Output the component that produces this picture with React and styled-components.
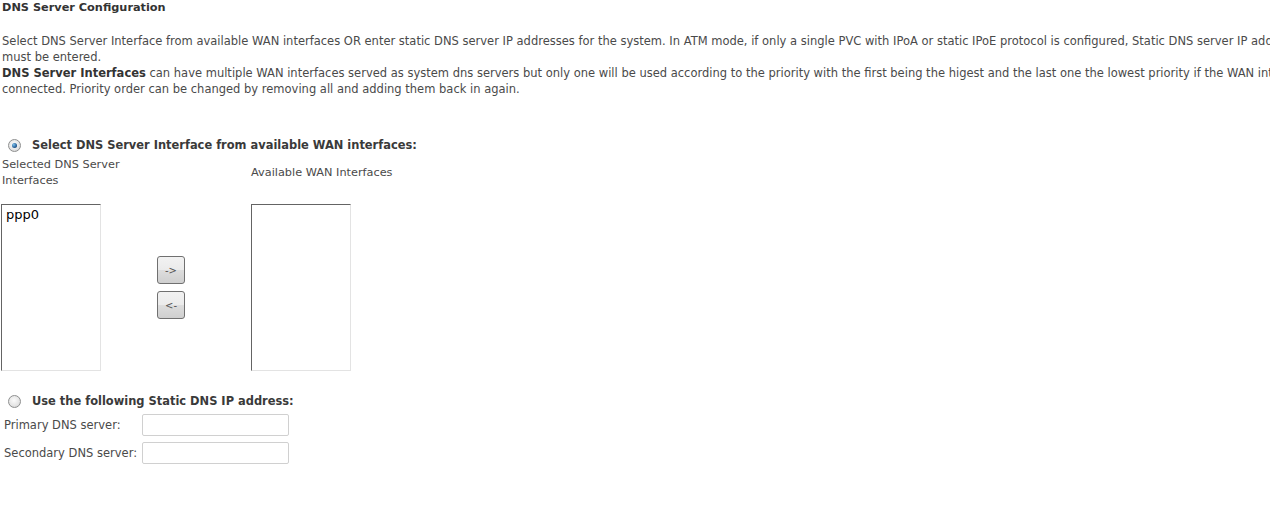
import React from "react";
import styled, { createGlobalStyle } from "styled-components";

const Global = createGlobalStyle`
  html, body { margin: 0; padding: 0; background: #fff; }
  body { font-family: Tahoma, "DejaVu Sans", Verdana, sans-serif; }
`;

const Viewport = styled.div`
  width: 1270px;
  overflow: hidden;
`;

const Page = styled.div`
  width: 1325px;
  color: #4a4a4a;
  font-size: 11.5px;
  line-height: 16px;
`;

const Title = styled.div`
  font-weight: bold;
  color: #333;
  padding-left: 2px;
  font-size: 11.3px;
  line-height: 16px;
`;

const Para = styled.p`
  margin: 17px 0 0;
  padding-left: 2px;
  line-height: 16px;
  b { color: #333; }
`;

const Section = styled.div`
  display: flex;
  align-items: center;
  gap: 11px;
  margin-top: ${(p) => p.$top}px;
  padding-left: 8px;
  font-weight: bold;
  color: #3a3a3a;
  font-size: 11.45px;
`;

const Radio = styled.span`
  width: 13px;
  height: 13px;
  border-radius: 50%;
  border: 1px solid #8e8f8f;
  background: radial-gradient(circle at 45% 40%, #fbfbfb, #e4e4e4 60%, #c8c8c8);
  display: inline-flex;
  align-items: center;
  justify-content: center;
  box-sizing: border-box;
  &::after {
    content: "";
    display: ${(p) => (p.$on ? "block" : "none")};
    width: 5px;
    height: 5px;
    border-radius: 50%;
    background: radial-gradient(circle at 35% 35%, #7fc4f0, #1b4f86 70%, #0f3460);
  }
`;

const Picker = styled.div`
  display: grid;
  grid-template-columns: 249px auto;
  margin-top: 4px;
  padding-left: 2px;
`;

const ColLabel = styled.div`
  height: 32px;
  display: flex;
  align-items: center;
  max-width: ${(p) => p.$w || "none"};
  font-size: 11.3px;
`;

const ListRow = styled.div`
  display: flex;
  align-items: flex-start;
  margin-top: 15px;
  padding-left: 1px;
`;

const ListBox = styled.div`
  width: 100px;
  height: 167px;
  box-sizing: border-box;
  border-top: 1px solid #646464;
  border-left: 1px solid #646464;
  border-right: 1px solid #e3e3e3;
  border-bottom: 1px solid #e3e3e3;
  padding: 2px 4px;
  font-size: 13px;
  color: #000;
  line-height: 16px;
`;

const ButtonCol = styled.div`
  width: 150px;
  display: flex;
  flex-direction: column;
  gap: 7px;
  padding: 52px 0 0 56px;
  box-sizing: border-box;
`;

const MoveButton = styled.button`
  width: 28px;
  height: 28px;
  box-sizing: border-box;
  border: 1px solid #707070;
  border-radius: 3px;
  background: linear-gradient(#f2f2f2, #ebebeb 50%, #dddddd 51%, #cfcfcf);
  font-family: inherit;
  font-size: 10px;
  color: #555;
  padding: 0;
`;

const Fields = styled.div`
  display: grid;
  grid-template-columns: 138px 147px;
  row-gap: 6px;
  margin-top: 5px;
  padding-left: 4px;
  align-items: center;
`;

const FieldLabel = styled.div`
  font-size: 11.5px;
  white-space: nowrap;
`;

const TextInput = styled.input`
  width: 147px;
  height: 22px;
  box-sizing: border-box;
  border: 1px solid #d0d0d0;
  border-radius: 2px;
  margin: 0;
`;

export default function App() {
  return (
    <Viewport>
      <Global />
      <Page>
        <Title>DNS Server Configuration</Title>
        <Para>
          Select DNS Server Interface from available WAN interfaces OR enter static DNS server IP addresses for the system. In ATM mode, if only a single PVC with IPoA or static IPoE protocol is configured, Static DNS server IP addresses must be entered.
          <br />
          <b>DNS Server Interfaces</b> can have multiple WAN interfaces served as system dns servers but only one will be used according to the priority with the first being the higest and the last one the lowest priority if the WAN interface is connected. Priority order can be changed by removing all and adding them back in again.
        </Para>
        <Section $top={40}>
          <Radio $on />
          Select DNS Server Interface from available WAN interfaces:
        </Section>
        <Picker>
          <ColLabel $w="125px">Selected DNS Server Interfaces</ColLabel>
          <ColLabel>Available WAN Interfaces</ColLabel>
        </Picker>
        <ListRow>
          <ListBox>ppp0</ListBox>
          <ButtonCol>
            <MoveButton>-&gt;</MoveButton>
            <MoveButton>&lt;-</MoveButton>
          </ButtonCol>
          <ListBox />
        </ListRow>
        <Section $top={22}>
          <Radio />
          Use the following Static DNS IP address:
        </Section>
        <Fields>
          <FieldLabel>Primary DNS server:</FieldLabel>
          <TextInput />
          <FieldLabel>Secondary DNS server:</FieldLabel>
          <TextInput />
        </Fields>
      </Page>
    </Viewport>
  );
}
